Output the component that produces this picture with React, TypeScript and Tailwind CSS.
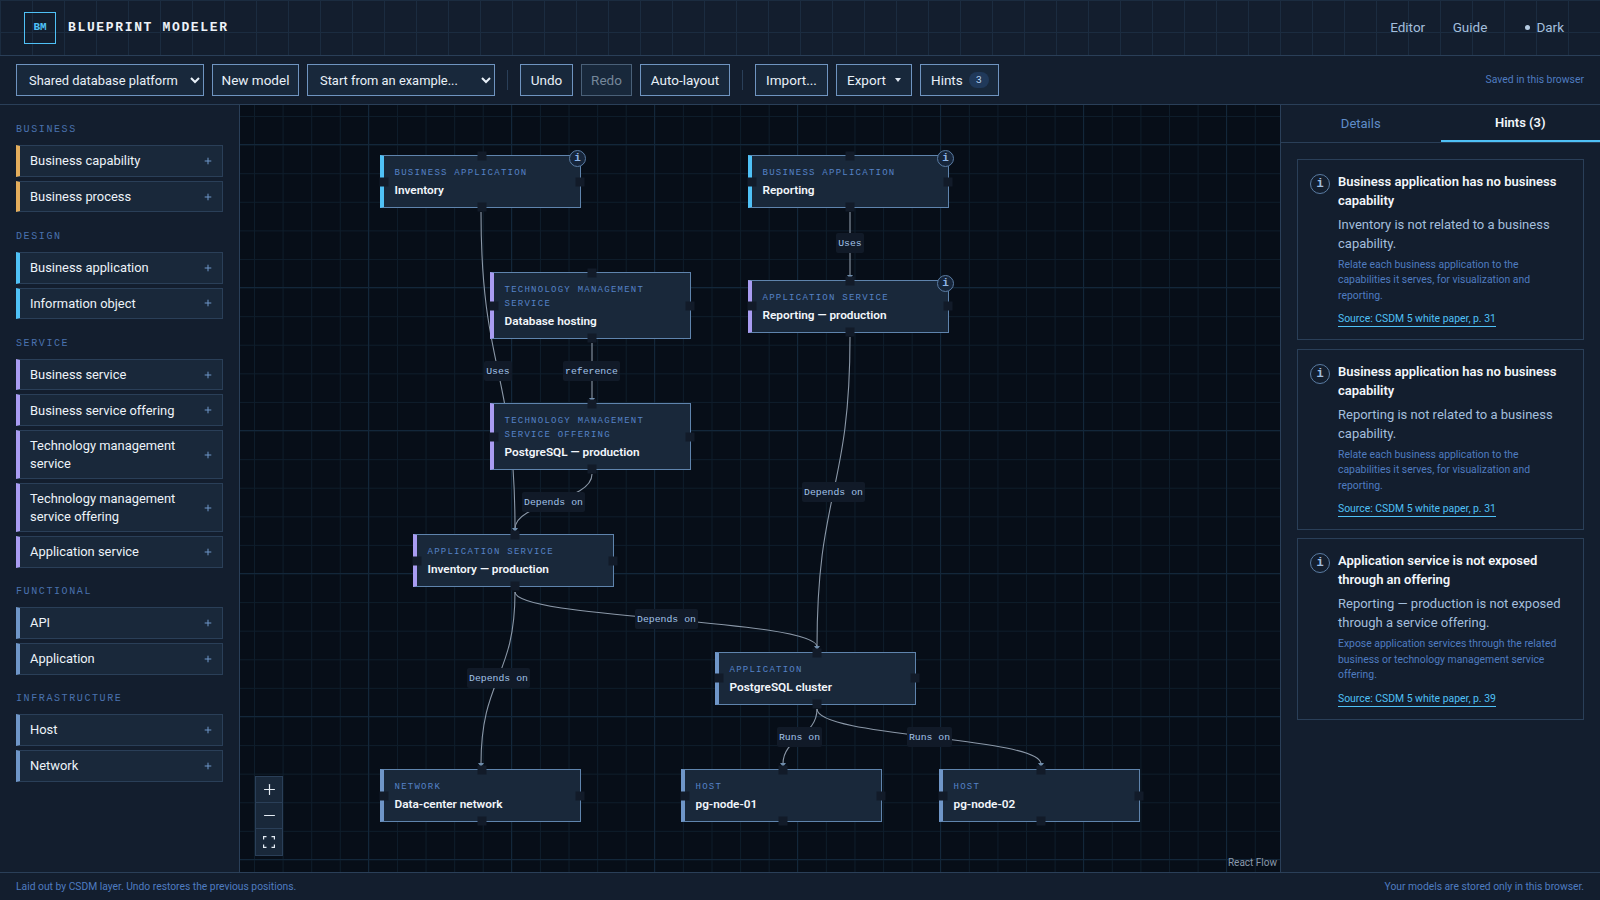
import { Plus, Minus } from 'lucide-react';

const SECTIONS = [
  {
    title: 'Business',
    accent: 'border-l-[#e3ad5c]',
    items: ['Business capability', 'Business process'],
  },
  {
    title: 'Design',
    accent: 'border-l-[#4fc1f6]',
    items: ['Business application', 'Information object'],
  },
  {
    title: 'Service',
    accent: 'border-l-[#a99cf2]',
    items: [
      'Business service',
      'Business service offering',
      'Technology management service',
      'Technology management service offering',
      'Application service',
    ],
  },
  {
    title: 'Functional',
    accent: 'border-l-[#6f96c8]',
    items: ['API', 'Application'],
  },
  {
    title: 'Infrastructure',
    accent: 'border-l-[#6f96c8]',
    items: ['Host', 'Network'],
  },
];

const NODES = [
  { type: 'Business application', name: 'Inventory', pos: 'left-[140px] top-[50px]', accent: 'border-l-[#4fc1f6]', info: true },
  { type: 'Business application', name: 'Reporting', pos: 'left-[508px] top-[50px]', accent: 'border-l-[#4fc1f6]', info: true },
  { type: 'Technology management service', name: 'Database hosting', pos: 'left-[250px] top-[167px]', accent: 'border-l-[#a99cf2]' },
  { type: 'Application service', name: 'Reporting — production', pos: 'left-[508px] top-[174.5px]', accent: 'border-l-[#a99cf2]', info: true },
  { type: 'Technology management service offering', name: 'PostgreSQL — production', pos: 'left-[250px] top-[298px]', accent: 'border-l-[#a99cf2]' },
  { type: 'Application service', name: 'Inventory — production', pos: 'left-[173px] top-[429px]', accent: 'border-l-[#a99cf2]' },
  { type: 'Application', name: 'PostgreSQL cluster', pos: 'left-[475px] top-[546.5px]', accent: 'border-l-[#6f96c8]' },
  { type: 'Network', name: 'Data-center network', pos: 'left-[140px] top-[664px]', accent: 'border-l-[#6f96c8]' },
  { type: 'Host', name: 'pg-node-01', pos: 'left-[441px] top-[664px]', accent: 'border-l-[#6f96c8]' },
  { type: 'Host', name: 'pg-node-02', pos: 'left-[699px] top-[664px]', accent: 'border-l-[#6f96c8]' },
];

// viewBox uses page coordinates, the canvas starts at 240,105
const EDGES = [
  'M481 212 C481 371 515 371 515 529',
  'M592 343 L592 399',
  'M592 474 C592 502 515 502 515 529',
  'M850 212 L850 276',
  'M850 337 C850 492 817 492 817 647',
  'M515 592 C515 619 817 619 817 647',
  'M515 592 C515 678 481 678 481 764',
  'M817 709 C817 737 783 737 783 764',
  'M817 709 C817 737 1041 737 1041 764',
];

const ARROWS = [
  [592, 403],
  [850, 280],
  [515, 533],
  [817, 651],
  [481, 768],
  [783, 768],
  [1041, 768],
];

const LABELS = [
  { text: 'Uses', pos: 'left-[244px] top-[256px] w-[28px]' },
  { text: 'reference', pos: 'left-[323px] top-[256px] w-[57px]' },
  { text: 'Uses', pos: 'left-[596px] top-[128px] w-[28px]' },
  { text: 'Depends on', pos: 'left-[282px] top-[387px] w-[63px]' },
  { text: 'Depends on', pos: 'left-[562px] top-[377px] w-[63px]' },
  { text: 'Depends on', pos: 'left-[395px] top-[504px] w-[63px]' },
  { text: 'Depends on', pos: 'left-[227px] top-[563px] w-[63px]' },
  { text: 'Runs on', pos: 'left-[537px] top-[622px] w-[45px]' },
  { text: 'Runs on', pos: 'left-[667px] top-[622px] w-[45px]' },
];

const HINTS = [
  {
    title: 'Business application has no business capability',
    body: 'Inventory is not related to a business capability.',
    advice: 'Relate each business application to the capabilities it serves, for visualization and reporting.',
    source: 'Source: CSDM 5 white paper, p. 31',
  },
  {
    title: 'Business application has no business capability',
    body: 'Reporting is not related to a business capability.',
    advice: 'Relate each business application to the capabilities it serves, for visualization and reporting.',
    source: 'Source: CSDM 5 white paper, p. 31',
  },
  {
    title: 'Application service is not exposed through an offering',
    body: 'Reporting — production is not exposed through a service offering.',
    advice: 'Expose application services through the related business or technology management service offering.',
    source: 'Source: CSDM 5 white paper, p. 39',
  },
];

const btn = 'h-8 border border-[#6f94c0] bg-[#18283b] text-[13.5px] text-[#e8f0f8] flex items-center justify-center';
const selectCls = 'h-8 w-[188px] pl-2 border border-[#6f94c0] bg-[#18283b] text-[12.9px] text-[#e8f0f8] outline-none';
const handle = 'absolute w-[9px] h-[9px] bg-[#121b29] -translate-x-1/2 -translate-y-1/2';

function CanvasNode({ node }: { node: (typeof NODES)[number] }) {
  return (
    <div className={`absolute w-[201px] border border-[#5f84ad] border-l-4 bg-[#19283a] pl-[10.5px] pr-2 pt-[10px] pb-[9px] ${node.pos} ${node.accent}`}>
      <div className="font-['Liberation_Mono',monospace] text-[9px] leading-[14px] tracking-[1.25px] uppercase text-[#5582c6]">
        {node.type}
      </div>
      <div className="mt-[3px] text-[11.8px] leading-[15px] font-semibold text-[#f2f6fb]">{node.name}</div>
      <span className={`${handle} left-1/2 top-0`} />
      <span className={`${handle} left-1/2 top-full`} />
      <span className={`${handle} left-0 top-1/2`} />
      <span className={`${handle} left-full top-1/2`} />
      {node.info && (
        <span className="absolute -right-[6px] -top-[6px] w-[17px] h-[17px] rounded-full border border-[#5a7ca3] bg-[#16253a] flex items-center justify-center font-['Liberation_Mono',monospace] text-[11px] font-bold text-[#8fb4e6]">
          i
        </span>
      )}
    </div>
  );
}

export default function App() {
  return (
    <div className="h-screen flex flex-col overflow-hidden bg-[#131e2e] font-[Roboto,sans-serif] text-[#e8f0f8]">
      {/* Header */}
      <header className="h-[56px] shrink-0 flex items-center justify-between pl-6 pr-9 border-b border-[#2a3f58] bg-[#131e2e] bg-[linear-gradient(#1b2c40_1px,transparent_1px),linear-gradient(90deg,#1b2c40_1px,transparent_1px)] bg-[size:32px_32px]">
        <div className="flex items-center gap-3">
          <div className="w-8 h-8 border border-[#4fc1f6] flex items-center justify-center font-['Liberation_Mono',monospace] text-[11px] font-bold text-[#4fc1f6]">
            BM
          </div>
          <span className="mt-px font-['Liberation_Mono',monospace] text-[13px] font-bold tracking-[1.65px] text-[#eef3f9]">
            BLUEPRINT MODELER
          </span>
        </div>
        <nav className="flex items-center text-[13.5px] text-[#a3bfdd]">
          <span>Editor</span>
          <span className="ml-[27.5px]">Guide</span>
          <span className="ml-[38px] w-[5px] h-[5px] rounded-full bg-[#b5cbe2]" />
          <span className="ml-[6px]">Dark</span>
        </nav>
      </header>

      {/* Toolbar */}
      <div className="h-[49px] shrink-0 flex items-center gap-2 px-4 border-b border-[#2a3f58] bg-[#131e2e]">
        <select defaultValue="a" className={selectCls}>
          <option value="a">Shared database platform</option>
        </select>
        <button className={`${btn} w-[87px]`}>New model</button>
        <select defaultValue="a" className={selectCls}>
          <option value="a">Start from an example...</option>
        </select>
        <div className="w-px h-5 mx-1 bg-[#2a3f58]" />
        <button className={`${btn} w-[53px]`}>Undo</button>
        <button className="h-8 w-[51px] border border-[#4a6078] bg-[#18283b] text-[13.5px] text-[#75879a]">Redo</button>
        <button className={`${btn} w-[90px]`}>Auto-layout</button>
        <div className="w-px h-5 mx-1 bg-[#2a3f58]" />
        <button className={`${btn} w-[73px]`}>Import...</button>
        <button className={`${btn} w-[76px] gap-[9px]`}>
          Export
          <svg width="6" height="4" viewBox="0 0 6 4"><path d="M0 0h6L3 4z" fill="#dfe8f2" /></svg>
        </button>
        <button className="h-8 w-[79px] pl-[10px] border border-[#6f94c0] bg-[#18283b] text-[13.5px] text-[#e8f0f8] flex items-center gap-[6px]">
          Hints
          <span className="w-5 h-4 rounded-full bg-[#20395a] flex items-center justify-center font-['Liberation_Mono',monospace] text-[10px] text-[#b5d0ee]">3</span>
        </button>
        <span className="ml-auto text-[10.4px] text-[#4f7cc0]">Saved in this browser</span>
      </div>

      <main className="flex-1 flex min-h-0">
        {/* Palette */}
        <aside className="w-[240px] shrink-0 border-r border-[#2a3f58] px-4 pt-[17px] flex flex-col gap-[16.5px]">
          {SECTIONS.map(section => (
            <section key={section.title}>
              <h2 className="h-[15px] mb-[8px] font-['Liberation_Mono',monospace] text-[10px] leading-[15px] tracking-[1.6px] uppercase text-[#4a72ae]">
                {section.title}
              </h2>
              <div className="flex flex-col gap-1">
                {section.items.map(item => (
                  <div
                    key={item}
                    className={`w-[207px] min-h-[31.7px] flex items-center justify-between border border-[#2a3f58] border-l-4 bg-[#19283a] pl-[10px] pr-[9px] py-[6px] ${section.accent}`}
                  >
                    <span className="text-[12.9px] leading-[17.5px] text-[#edf3f9]">{item}</span>
                    <Plus size={10} className="shrink-0 ml-2 text-[#6f96c8]" strokeWidth={2.4} />
                  </div>
                ))}
              </div>
            </section>
          ))}
        </aside>

        {/* Canvas */}
        <div className="relative flex-1 overflow-hidden bg-[#070e18] bg-[linear-gradient(#13273a_1px,transparent_1px),linear-gradient(90deg,#13273a_1px,transparent_1px),linear-gradient(#0e1d2b_1px,transparent_1px),linear-gradient(90deg,#0e1d2b_1px,transparent_1px)] bg-[size:143px_143px,143px_143px,28.6px_28.6px,28.6px_28.6px] bg-[position:0_39px,128px_0,0_11px,14px_0]">
          <svg className="absolute inset-0" width="1040" height="767" viewBox="240 105 1040 767" fill="none">
            {EDGES.map(d => <path key={d} d={d} stroke="#8b98a8" strokeWidth="1.1" />)}
            {ARROWS.map(([x, y]) => (
              <path key={`${x}-${y}`} d={`M${x - 3} ${y - 5}h6l-3 4z`} fill="#6f8dac" />
            ))}
          </svg>
          {LABELS.map(label => (
            <div
              key={label.pos}
              className={`absolute h-5 pt-[3px] rounded-[2px] bg-[#111a28] flex items-center justify-center font-['Liberation_Mono',monospace] text-[9.8px] text-[#a3c4ea] ${label.pos}`}
            >
              {label.text}
            </div>
          ))}
          {NODES.map(node => <CanvasNode key={node.name} node={node} />)}

          {/* Zoom controls */}
          <div className="absolute left-[15px] top-[671px] w-[28px] border border-[#2a3f58] bg-[#19283a] flex flex-col text-[#e4ebf3]">
            <div className="h-[26px] flex items-center justify-center border-b border-[#2a3f58]"><Plus size={17} strokeWidth={1.7} /></div>
            <div className="h-[26px] flex items-center justify-center border-b border-[#2a3f58]"><Minus size={17} strokeWidth={1.7} /></div>
            <div className="h-[26px] flex items-center justify-center">
              <svg width="12" height="12" viewBox="0 0 12 12" fill="none" stroke="currentColor" strokeWidth="1.2">
                <path d="M.6 3.5V.6h2.9M8.5.6h2.9v2.9M11.4 8.5v2.9H8.5M3.5 11.4H.6V8.5" />
              </svg>
            </div>
          </div>
          <span className="absolute right-[3px] bottom-[2px] text-[10px] text-[#8a99ab]">React Flow</span>
        </div>

        {/* Inspector */}
        <aside className="w-[320px] shrink-0 border-l border-[#2a3f58] flex flex-col">
          <div className="h-[38px] shrink-0 flex border-b border-[#2a3f58]">
            <div className="flex-1 flex items-center justify-center text-[13px] text-[#5f8cc8]">Details</div>
            <div className="flex-1 flex items-center justify-center text-[13px] font-semibold text-[#f2f6fb] border-b-2 border-[#4fc1f6]">Hints (3)</div>
          </div>
          <div className="flex flex-col gap-[8.5px] px-4 pt-4">
            {HINTS.map((hint, i) => (
              <article key={i} className="flex gap-[8px] border border-[#2a3f58] pl-[12px] pr-[12px] pt-[12px] pb-[12px]">
                <span className="mt-[2px] w-5 h-5 shrink-0 rounded-full border border-[#5a7ca3] flex items-center justify-center font-['Liberation_Mono',monospace] text-[12px] font-bold text-[#9fbde0]">i</span>
                <div className="min-w-0">
                  <h3 className="text-[13px] leading-[19px] font-semibold text-[#f2f6fb]">{hint.title}</h3>
                  <p className="mt-[5px] text-[13px] leading-[19px] text-[#a3bfdd]">{hint.body}</p>
                  <p className="mt-[4px] text-[10.4px] leading-[15.4px] text-[#4f7cc0]">{hint.advice}</p>
                  <a className="block w-fit mt-[8px] text-[10.4px] leading-[15px] text-[#4fc1f6] border-b border-[#4fc1f6]">{hint.source}</a>
                </div>
              </article>
            ))}
          </div>
        </aside>
      </main>

      {/* Status bar */}
      <footer className="h-[28px] shrink-0 flex items-center justify-between px-4 border-t border-[#2a3f58] bg-[#131e2e] text-[10.3px] text-[#4f7cc0]">
        <span>Laid out by CSDM layer. Undo restores the previous positions.</span>
        <span>Your models are stored only in this browser.</span>
      </footer>
    </div>
  );
}
